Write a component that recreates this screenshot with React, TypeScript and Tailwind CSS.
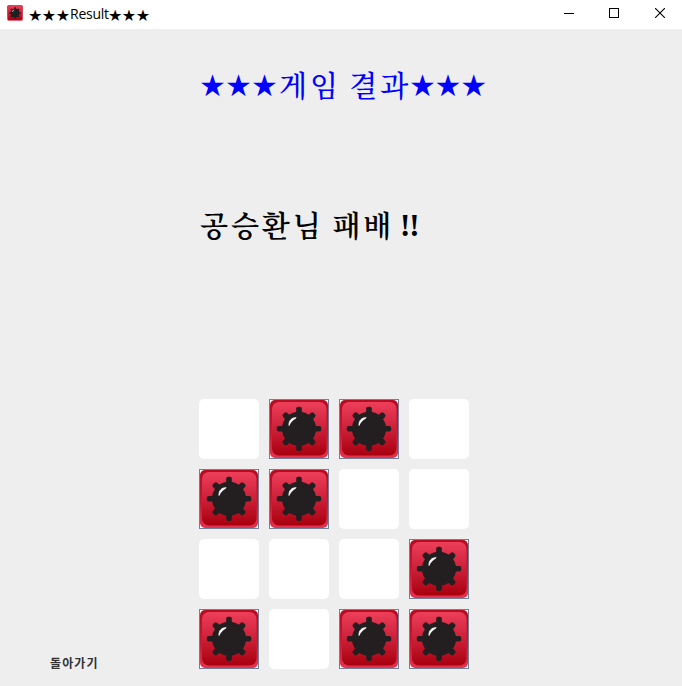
import React from 'react';

const BOARD = [
  [false, true, true, false],
  [true, true, false, false],
  [false, false, false, true],
  [true, false, true, true],
];

function Mine({ id, className, framed = true }: { id: string; className: string; framed?: boolean }) {
  return (
    <svg viewBox="0 0 60 60" className={className} aria-hidden="true">
      <defs>
        <linearGradient id={`${id}-face`} x1="0" y1="0" x2="0" y2="1">
          <stop offset="0" stopColor="#ed3e5a" />
          <stop offset="0.5" stopColor="#cc2039" />
          <stop offset="1" stopColor="#a8000e" />
        </linearGradient>
        <linearGradient id={`${id}-edge`} x1="0" y1="0" x2="0" y2="1">
          <stop offset="0" stopColor="#b60c22" />
          <stop offset="0.55" stopColor="#c41a32" />
          <stop offset="1" stopColor="#e43450" />
        </linearGradient>
      </defs>
      {framed && <rect width="60" height="60" fill="#718096" />}
      {framed && <rect x="1" y="1" width="58" height="58" fill="#fff" />}
      <rect x="1" y="1" width="58" height="58" rx="5" fill={`url(#${id}-edge)`} />
      <rect x="3" y="3" width="54.5" height="53.5" rx="7" fill={`url(#${id}-face)`} />
      <g fill="#231f20">
        <rect x="27.2" y="7.7" width="5.6" height="44.2" rx="1.8" />
        <rect x="7.8" y="27" width="44.4" height="5.6" rx="1.8" />
        <rect x="27" y="8.2" width="6" height="43.2" rx="2.2" transform="rotate(45 30 29.8)" />
        <rect x="27" y="8.2" width="6" height="43.2" rx="2.2" transform="rotate(-45 30 29.8)" />
        <circle cx="30" cy="29.8" r="17.1" />
      </g>
      <path d="M20 26.5C19.6 21.8 22.7 18.4 27.2 18.7C25.5 20.4 22.4 21.3 20 26.5Z" fill="#fff" stroke="#fff" strokeWidth="0.8" strokeLinejoin="round" />
    </svg>
  );
}

export default function App() {
  return (
    <div className="flex h-[686px] w-[682px] flex-col overflow-hidden bg-[#eeeeee] text-black">
      <header className="flex h-[29px] shrink-0 items-start justify-between bg-white">
        <div className="flex h-[29px] items-start pl-[7px]">
          <Mine id="title" framed={false} className="mt-[5px] h-4 w-4" />
          <h1 className="ml-[5px] flex whitespace-nowrap leading-[20px]">
            <span className="w-[42px] pt-[6px] font-['DejaVu_Sans',sans-serif] text-[16px] tracking-[-0.5px]">★★★</span>
            <span className="w-[38px] pt-1 font-['Open_Sans',sans-serif] text-[14px] tracking-[-0.25px]">Result</span>
            <span className="pt-[6px] font-['DejaVu_Sans',sans-serif] text-[16px] tracking-[-0.5px]">★★★</span>
          </h1>
        </div>
        <div className="flex pr-[17px] pt-2">
          <button aria-label="Minimize" className="mr-[35px]">
            <svg width="10" height="10" className="block"><path d="M0 5.5H10" stroke="#000" /></svg>
          </button>
          <button aria-label="Maximize" className="mr-[36px]">
            <svg width="10" height="10" className="block"><rect x="0.5" y="0.5" width="9" height="9" fill="none" stroke="#000" /></svg>
          </button>
          <button aria-label="Close">
            <svg width="10" height="10" className="block"><path d="M0 0L10 10M10 0L0 10" stroke="#000" strokeWidth="1.1" /></svg>
          </button>
        </div>
      </header>
      <main className="flex flex-1 flex-col">
        <h2 className="ml-[199px] mt-[35px] flex h-10 whitespace-nowrap leading-10 text-[#0000ff]">
          <span className="w-[80px] pt-[2px] font-['DejaVu_Sans',sans-serif] text-[30px] tracking-[-0.9px]">★★★</span>
          <span className="w-[130px] pt-px font-['Noto_Serif_CJK_KR','Noto_Sans_CJK_KR',serif] text-[29px] font-medium tracking-[3.1px] [word-spacing:-2.5px]">게임 결과</span>
          <span className="pt-[2px] font-['DejaVu_Sans',sans-serif] text-[30px] tracking-[-1.3px]">★★★</span>
        </h2>
        <p className="ml-[200px] mt-[100px] flex h-10 whitespace-nowrap font-['Noto_Serif_CJK_KR','Noto_Sans_CJK_KR',serif] text-[29px] leading-10">
          <span className="w-[200px] pt-px font-semibold tracking-[2.9px] [word-spacing:-1.5px]">공승환님 패배</span>
          <span className="pt-[2px] font-['Liberation_Serif',serif] text-[31px] font-bold tracking-[-1px]">!!</span>
        </p>
        <div className="mt-[155px] flex items-end">
          <button className="mb-[-4px] ml-[50px] h-5 w-[149px] whitespace-nowrap text-left font-['Noto_Sans_CJK_KR',sans-serif] text-[12px] font-bold leading-5 tracking-[1.1px] text-[#333333]">
            돌아가기
          </button>
          <div className="grid grid-cols-4 gap-[10px]">
            {BOARD.flatMap((row, y) =>
              row.map((mine, x) =>
                mine ? (
                  <Mine key={`${y}-${x}`} id={`mine-${y}-${x}`} className="h-[60px] w-[60px]" />
                ) : (
                  <div key={`${y}-${x}`} className="h-[60px] w-[60px] rounded-[5px] bg-white" />
                ),
              ),
            )}
          </div>
        </div>
      </main>
    </div>
  );
}
